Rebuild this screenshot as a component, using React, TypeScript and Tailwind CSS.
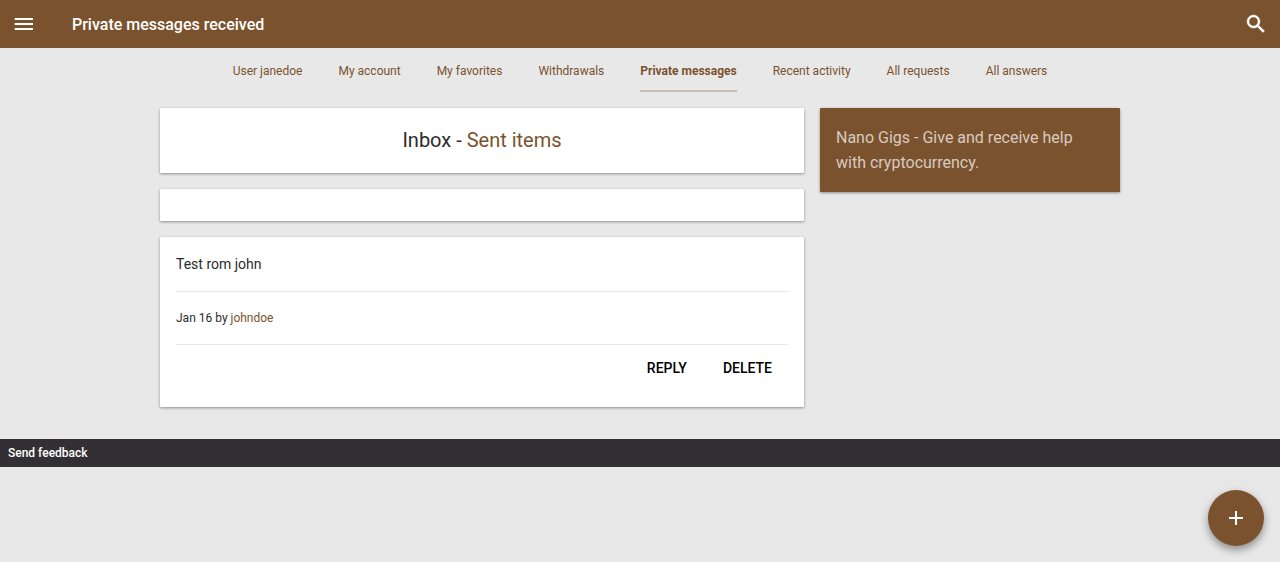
import React from "react";

const tabs = [
  "User janedoe",
  "My account",
  "My favorites",
  "Withdrawals",
  "Private messages",
  "Recent activity",
  "All requests",
  "All answers",
];

const card =
  "rounded-[1px] shadow-[0_1px_3px_0_rgba(0,0,0,0.4)]";

export default function App() {
  return (
    <div className="min-h-screen bg-[#e8e8e8] font-[Roboto,sans-serif] text-[#2b2b2b]">
      <header className="flex h-12 items-center bg-[#7b522e] px-3 text-white">
        <button type="button" aria-label="Menu" className="size-6">
          <svg viewBox="0 0 24 24" className="size-6" fill="currentColor">
            <path d="M2.7 18h18.3v-2H2.7v2zm0-5h18.3v-2H2.7v2zm0-7v2h18.3V6H2.7z" />
          </svg>
        </button>
        <h1 className="ml-9 flex-1 pt-px text-base font-medium">Private messages received</h1>
        <button type="button" aria-label="Search" className="size-6">
          <svg
            viewBox="0 0 24 24"
            className="size-6"
            fill="currentColor"
            stroke="currentColor"
            strokeWidth="0.4"
          >
            <path d="M15.5 14h-.79l-.28-.27A6.471 6.471 0 0 0 16 9.5 6.5 6.5 0 1 0 9.5 16c1.61 0 3.09-.59 4.23-1.57l.27.28v.79l5 4.99L20.49 19l-4.99-5zm-6 0C7.01 14 5 11.99 5 9.5S7.01 5 9.5 5 14 7.01 14 9.5 11.99 14 9.5 14z" />
          </svg>
        </button>
      </header>
      <nav className="flex flex-wrap justify-center gap-x-9 text-xs">
        {tabs.map((tab) => (
          <a
            key={tab}
            href="#"
            aria-current={tab === "Private messages" ? "page" : undefined}
            className={
              tab === "Private messages"
                ? "h-11 border-b-2 border-[#cabeb3] leading-[46px] font-bold text-[#7b522e]"
                : "h-11 border-b-2 border-transparent leading-[46px] text-[#7b522e]"
            }
          >
            {tab}
          </a>
        ))}
      </nav>
      <div className="mx-auto flex max-w-[960px] items-start gap-4 pt-4 pb-8">
        <main className="flex min-w-0 flex-1 flex-col gap-4">
          <h2 className={`${card} bg-white px-4 py-4 text-center text-xl leading-[33px]`}>
            Inbox - <a href="#" className="text-[#7b522e]">Sent items</a>
          </h2>
          <div className={`${card} h-8 bg-white`} />
          <article className={`${card} bg-white px-4 pb-5`}>
            <p className="border-b border-[#e8e8e8] py-4 text-sm leading-[22px]">Test rom john</p>
            <p className="border-b border-[#e8e8e8] py-4 text-xs leading-5">
              Jan 16 by <a href="#" className="text-[#7b522e]">johndoe</a>
            </p>
            <div className="flex justify-end gap-1 pt-1">
              <button type="button" className="h-[38px] px-4 text-sm font-medium text-black uppercase">Reply</button>
              <button type="button" className="h-[38px] px-4 text-sm font-medium text-black uppercase">Delete</button>
            </div>
          </article>
        </main>
        <aside className={`${card} w-[300px] bg-[#7b522e] px-4 py-[17px] text-base leading-[25px] text-[#d7cbc0]`}>
          Nano Gigs - Give and receive help with cryptocurrency.
        </aside>
      </div>
      <footer className="bg-[#323033] px-2 text-xs leading-7 font-medium text-white">
        <a href="#">Send feedback</a>
      </footer>
      <button
        type="button"
        aria-label="New message"
        className="fixed right-4 bottom-4 flex size-14 items-center justify-center rounded-full bg-[#7b522e] text-white shadow-[0_4px_8px_0_rgba(0,0,0,0.4)]"
      >
        <svg viewBox="0 0 24 24" className="size-6" fill="currentColor">
          <path d="M19 13h-6v6h-2v-6H5v-2h6V5h2v6h6v2z" />
        </svg>
      </button>
    </div>
  );
}
